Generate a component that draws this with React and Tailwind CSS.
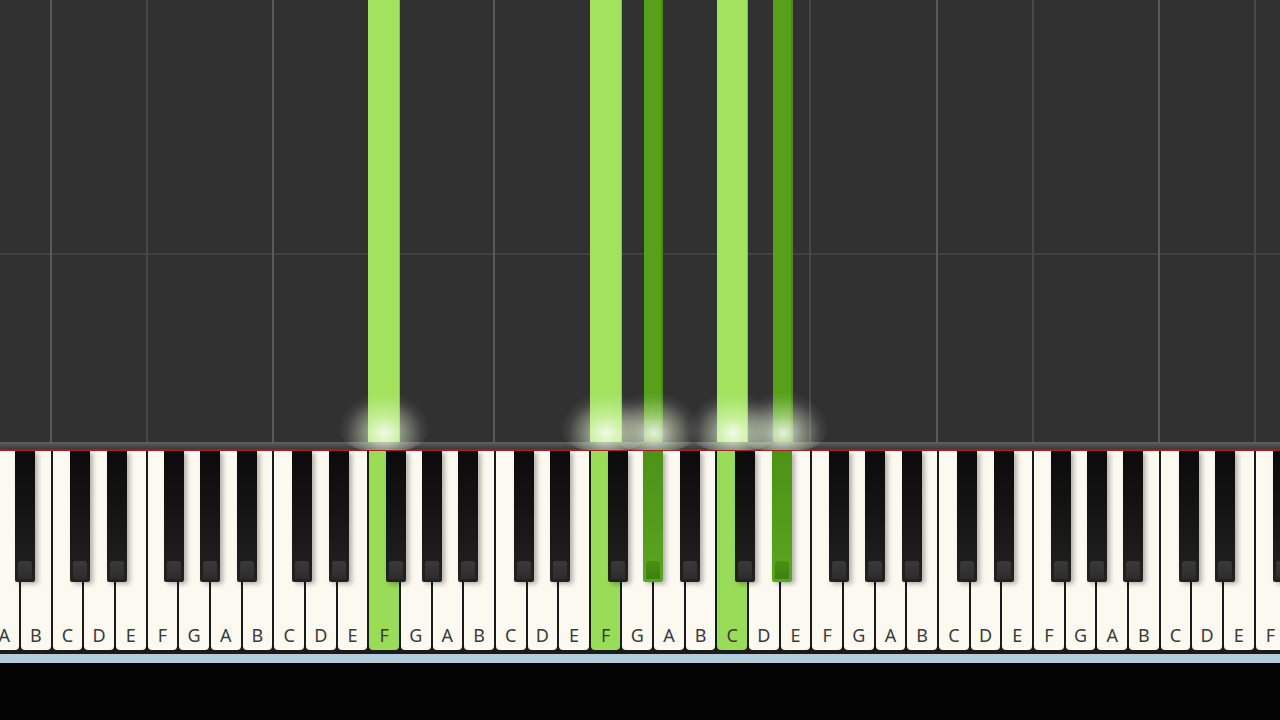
import React from "react";

const KEY_W = 31.67;
const START = -11.67;
const LETTERS = "ABCDEFG";

// offsets of each black key relative to the boundary on its left white key
const BLACK_OFFSET = { C: -3, D: 2, F: -4, G: 0, A: 5 };

const whiteKeys = Array.from({ length: 41 }, (_, i) => LETTERS[i % 7]);
const activeWhite = [12, 19, 23];
const activeBlack = [20, 24];

const gridLines = [
  { x: 51, strong: true },
  { x: 147, strong: false },
  { x: 273, strong: true },
  { x: 494, strong: true },
  { x: 810, strong: false },
  { x: 937, strong: true },
  { x: 1033, strong: false },
  { x: 1159, strong: true },
  { x: 1255, strong: false },
];

const notes = [
  { left: 368, width: 32, dark: false },
  { left: 590, width: 32, dark: false },
  { left: 644, width: 19, dark: true },
  { left: 717, width: 31, dark: false },
  { left: 773, width: 20, dark: true },
];

const blackKeys = whiteKeys
  .map((letter, i) => {
    if (!(letter in BLACK_OFFSET)) return null;
    const center = START + (i + 1) * KEY_W + BLACK_OFFSET[letter];
    return { i, left: center - 10 };
  })
  .filter(Boolean);

const App = () => {
  return (
    <div className="w-[1280px] h-[720px] bg-black flex flex-col overflow-hidden font-['Noto_Sans',sans-serif]">
      {/* NOTE LANES */}
      <div className="relative z-10 h-[442px] shrink-0 bg-[#313131]">
        <div className="absolute left-0 right-0 top-[253px] h-[2px] bg-[#424242]" />
        {gridLines.map((l) => (
          <div
            key={l.x}
            className={`absolute top-0 bottom-0 w-[2px] ${l.strong ? "bg-[#5a5a5a]" : "bg-[#484848]"}`}
            style={{ left: l.x - 1 }}
          />
        ))}

        {notes.map((n) => (
          <div
            key={n.left}
            className={`absolute top-0 h-[442px] ${
              n.dark
                ? "bg-[#57a01a] border-r-2 border-[#4a8c14]"
                : "bg-[#a2e25e] border-r border-[#86bf48]"
            }`}
            style={{ left: n.left, width: n.width }}
          />
        ))}

        {/* glow where notes hit the keyboard */}
        {notes.map((n) => (
          <div
            key={"g" + n.left}
            className="absolute top-[390px] w-[96px] h-[60px] rounded-full bg-[radial-gradient(ellipse_at_50%_72%,rgba(255,255,255,0.85)_0%,rgba(235,255,215,0.45)_28%,rgba(255,255,255,0.08)_55%,rgba(255,255,255,0)_68%)]"
            style={{ left: n.left + n.width / 2 - 48 }}
          />
        ))}
      </div>

      <div className="h-[7px] shrink-0 bg-gradient-to-b from-[#626262] to-[#3a3a3a]" />
      <div className="h-[2px] shrink-0 bg-[#a81c1c]" />

      {/* KEYBOARD */}
      <div className="relative h-[199px] shrink-0 bg-[#1a1a1a] overflow-hidden">
        <div className="flex h-full ml-[-11.67px]">
          {whiteKeys.map((letter, i) => {
            const on = activeWhite.includes(i);
            return (
              <div key={i} className="w-[31.67px] shrink-0 h-full px-px">
                <div
                  className={`h-full rounded-b-[4px] flex items-end justify-center pb-[6px] ${
                    on ? "bg-[#98dc58]" : "bg-[#fcfaf0]"
                  }`}
                >
                  <span className="text-[18px] leading-none text-[#3a3a3a]">{letter}</span>
                </div>
              </div>
            );
          })}
        </div>

        {blackKeys.map((b) => {
          const on = activeBlack.includes(b.i);
          return (
            <div
              key={"b" + b.i}
              className={`absolute top-0 w-[20px] h-[131px] flex flex-col justify-end rounded-b-[2px] shadow-[3px_2px_5px_rgba(0,0,0,0.3)] ${
                on
                  ? "bg-gradient-to-b from-[#4c9216] to-[#5aa620]"
                  : "bg-gradient-to-b from-[#0b0b0b] via-[#151515] to-[#222222]"
              }`}
              style={{ left: b.left }}
            >
              <div
                className={`h-[18px] mx-[3px] mb-[3px] rounded-t-[3px] ${
                  on ? "bg-gradient-to-b from-[#4a9014] to-[#3f8010]" : "bg-gradient-to-b from-[#3a3a3a] to-[#2c2c2c]"
                }`}
              />
            </div>
          );
        })}
      </div>

      <div className="h-[4px] shrink-0 bg-[#1b1b1b]" />
      <div className="h-[9px] shrink-0 bg-[#b4cbdb]" />
      <div className="flex-1 bg-[#030303]" />
    </div>
  );
};

export default App;
